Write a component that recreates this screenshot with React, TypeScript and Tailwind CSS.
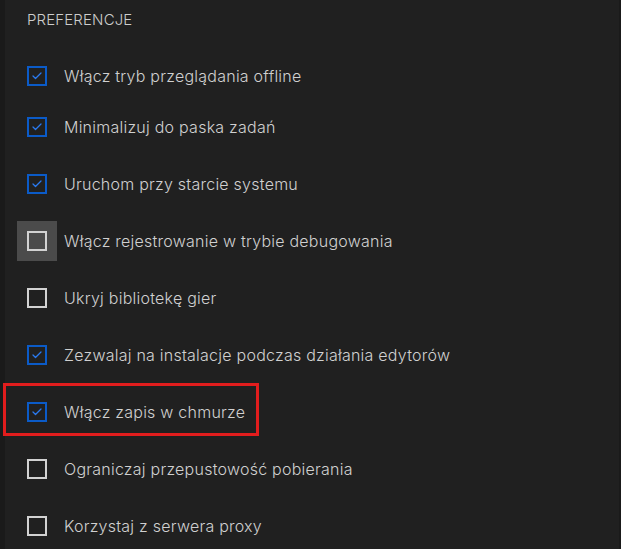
import { Check } from "lucide-react";

const options = [
  { label: "Włącz tryb przeglądania offline", checked: true },
  { label: "Minimalizuj do paska zadań", checked: true },
  { label: "Uruchom przy starcie systemu", checked: true },
  { label: "Włącz rejestrowanie w trybie debugowania", checked: false, hover: true },
  { label: "Ukryj bibliotekę gier", checked: false },
  { label: "Zezwalaj na instalacje podczas działania edytorów", checked: true },
  { label: "Włącz zapis w chmurze", checked: true, marked: true },
  { label: "Ograniczaj przepustowość pobierania", checked: false },
  { label: "Korzystaj z serwera proxy", checked: false },
];

function Box({ checked }: { checked: boolean }) {
  if (checked) {
    return (
      <span className="flex h-5 w-5 items-center justify-center border-2 border-[#0b5bc8]">
        <Check className="h-3 w-3 text-[#2a7af0]" strokeWidth={2.5} />
      </span>
    );
  }
  return <span className="h-5 w-5 border-2 border-[#d2d2d2]" />;
}

export default function App() {
  return (
    <div className="flex h-[549px] w-[621px] bg-[#1a1a1a] font-['Inter',sans-serif]">
      <div className="ml-[5px] mr-[2px] flex-1 bg-[#202020] pl-[12px]">
        {/* Section title */}
        <div className="pl-[10px] pt-[11px] text-[15px] font-light leading-[17px] tracking-[0.01em] text-[#cdcdcd]">
          PREFERENCJE
        </div>

        <div className="mt-[28px] flex flex-col">
          {options.map((o, i) => (
            <div
              key={o.label}
              className={`relative flex h-10 items-center ${i === 0 ? "" : i === 1 ? "mt-[11px]" : "mt-[17px]"}`}
            >
              <span
                className={`flex h-10 w-10 items-center justify-center ${o.hover ? "bg-[#4b4b4b]" : ""}`}
              >
                <Box checked={o.checked} />
              </span>
              <span className="ml-[7px] text-[16px] font-light tracking-[0.015em] text-[#d0d0d0]">
                {o.label}
              </span>
              {o.marked && (
                <span className="absolute left-[-14px] top-[-9px] h-[53px] w-[256px] border-[3px] border-[#e21d1d]" />
              )}
            </div>
          ))}
        </div>
      </div>
    </div>
  );
}
